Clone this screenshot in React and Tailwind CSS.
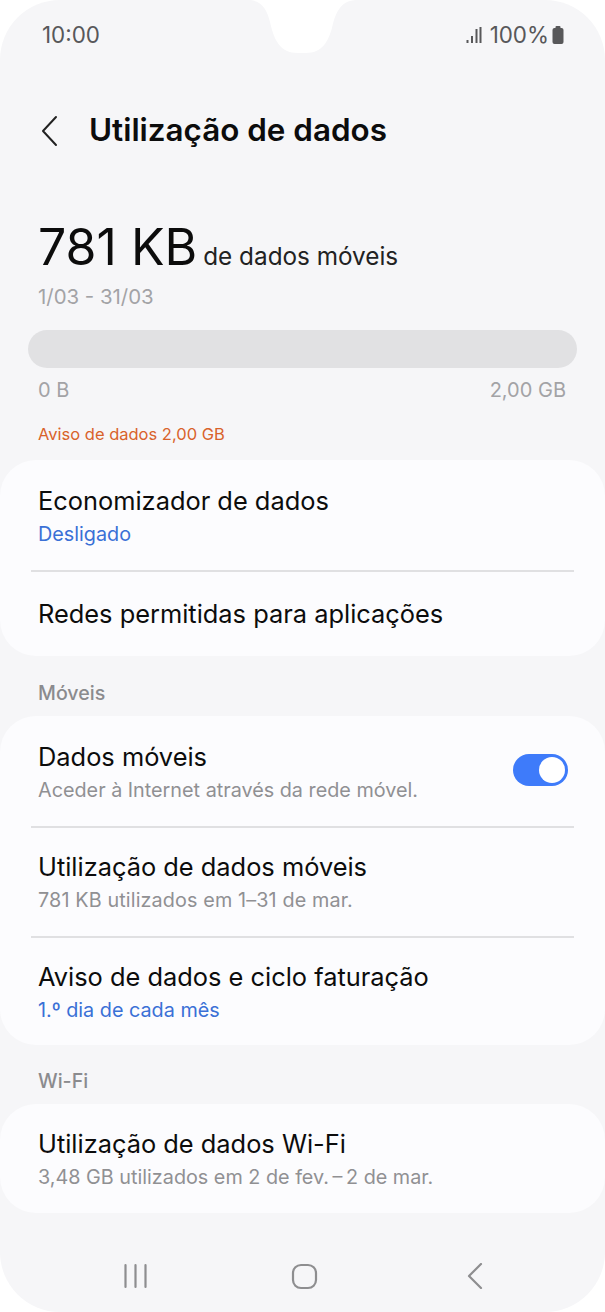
import React from 'react'

const Row = ({ title, sub, subClass = 'text-[#909093]', children, className = '' }) => (
  <div className={`flex items-center justify-between pl-[38px] pr-[37px] ${className}`}>
    <div>
      <div className="text-[25.4px] leading-[32px] text-[#0c0c0c]">{title}</div>
      {sub && <div className={`text-[19.8px] leading-[26px] mt-[4px] ${subClass}`}>{sub}</div>}
    </div>
    {children}
  </div>
)

const Divider = () => <div className="h-[2px] mx-[31px] bg-[#e0e0e2]" />

const Notch = () => (
  <svg className="absolute top-0 left-[230px]" width="150" height="54" viewBox="0 0 150 54">
    <path d="M18 0 C32 0 37 10 40 22 C44 40 50 53 68 53 H76 C92 53 98 42 102 28 C106 10 112 0 128 0 Z" fill="#fff" />
  </svg>
)

const Signal = () => (
  <svg width="16" height="16" viewBox="0 0 16 16" fill="#58585a">
    <rect x="0.5" y="13" width="2" height="3" />
    <rect x="5" y="9" width="2" height="7" />
    <rect x="9.5" y="2" width="2" height="14" />
    <rect x="13.5" y="0" width="2" height="16" />
  </svg>
)

const Battery = () => (
  <svg width="12" height="18" viewBox="0 0 12 18" fill="#58585a">
    <rect x="3.5" y="0" width="5" height="3" rx="1" />
    <rect x="0.5" y="2" width="11" height="16" rx="2" />
  </svg>
)

export default function App() {
  return (
    <div className="w-[605px] h-[1312px] bg-white overflow-hidden" style={{ fontFamily: 'Inter, sans-serif' }}>
      <div className="relative w-[605px] h-[1312px] bg-[#f6f6f8] rounded-[60px] overflow-hidden flex flex-col">
        <Notch />

        {/* status bar */}
        <div className="flex items-center justify-between h-[24px] mt-[23px] pl-[42px] pr-[41px] text-[#58585a] text-[22.4px]">
          <span>10:00</span>
          <div className="flex items-center">
            <Signal />
            <span className="ml-[8px] mr-[3px]">100%</span>
            <Battery />
          </div>
        </div>

        {/* header */}
        <div className="flex items-center h-[40px] mt-[64px] pl-[40px]">
          <svg width="20" height="32" viewBox="0 0 20 32" fill="none" stroke="#222" strokeWidth="2" strokeLinecap="round" strokeLinejoin="round">
            <path d="M16 2 L3 16 L16 30" />
          </svg>
          <h1 className="ml-[29px] text-[31.4px] font-semibold text-[#0c0c0c]">Utilização de dados</h1>
        </div>

        {/* summary */}
        <div className="flex items-baseline mt-[66px] pl-[38px] h-[57px]">
          <span className="text-[50px] leading-[60px] text-[#0c0c0c]">781 KB</span>
          <span className="ml-[6px] text-[24.3px] text-[#222]">de dados móveis</span>
        </div>
        <div className="mt-[10px] pl-[38px] text-[20.4px] leading-[26px] text-[#a3a3a6]">1/03 - 31/03</div>

        <div className="mt-[20px] mx-[28px] h-[38px] rounded-full bg-[#e1e1e3]" />
        <div className="flex justify-between mt-[9px] pl-[38px] pr-[39px] text-[20px] leading-[26px] text-[#a3a3a6]">
          <span>0 B</span>
          <span>2,00 GB</span>
        </div>
        <div className="mt-[20px] pl-[38px] text-[16.5px] leading-[22px] text-[#d9622b]">Aviso de dados 2,00 GB</div>

        {/* cards */}
        <div className="mt-[15px] bg-[#fcfcfe] rounded-[36px]">
          <Row title="Economizador de dados" sub="Desligado" subClass="text-[#3a70d6]" className="h-[110px] pt-[2px]" />
          <Divider />
          <Row title="Redes permitidas para aplicações" className="h-[84px]" />
        </div>

        <div className="mt-[25px] pl-[38px] h-[24px] text-[19.6px] leading-[24px] font-medium text-[#8b8b8e]">Móveis</div>

        <div className="mt-[11px] bg-[#fcfcfe] rounded-[36px]">
          <Row title="Dados móveis" sub="Aceder à Internet através da rede móvel." className="h-[110px] pt-[2px]">
            <div className="w-[55px] h-[32px] mb-[4px] rounded-full bg-[#3e7bfa] flex items-center justify-end pr-[3px]">
              <div className="w-[26px] h-[26px] rounded-full bg-white" />
            </div>
          </Row>
          <Divider />
          <Row title="Utilização de dados móveis" sub="781 KB utilizados em 1–31 de mar." subClass="text-[#909093] tracking-[0.12px]" className="h-[108px]" />
          <Divider />
          <Row title="Aviso de dados e ciclo faturação" sub="1.º dia de cada mês" subClass="text-[#3a70d6]" className="h-[107px]" />
        </div>

        <div className="mt-[24px] pl-[38px] h-[24px] text-[19.6px] leading-[24px] font-medium text-[#8b8b8e]">Wi-Fi</div>

        <div className="mt-[11px] bg-[#fcfcfe] rounded-[36px]">
          <Row title="Utilização de dados Wi-Fi" sub={"3,48 GB utilizados em 2 de fev.\u2009–\u20092 de mar."} className="h-[109px]" />
        </div>

        {/* nav bar */}
        <div className="flex items-center mt-[49px] pl-[123px] h-[28px]">
          <svg width="25" height="26" viewBox="0 0 25 26" stroke="#8e8e90" strokeWidth="2.2" strokeLinecap="round">
            <path d="M2.5 2 V24 M12.5 2 V24 M22.5 2 V24" />
          </svg>
          <svg className="ml-[143px]" width="27" height="27" viewBox="0 0 27 27" fill="none" stroke="#8e8e90" strokeWidth="2.2">
            <rect x="2" y="2" width="23" height="23" rx="8" />
          </svg>
          <svg className="ml-[149px]" width="16" height="26" viewBox="0 0 16 26" fill="none" stroke="#8e8e90" strokeWidth="2.2" strokeLinecap="round" strokeLinejoin="round">
            <path d="M14 1 L2 13 L14 25" />
          </svg>
        </div>
      </div>
    </div>
  )
}
